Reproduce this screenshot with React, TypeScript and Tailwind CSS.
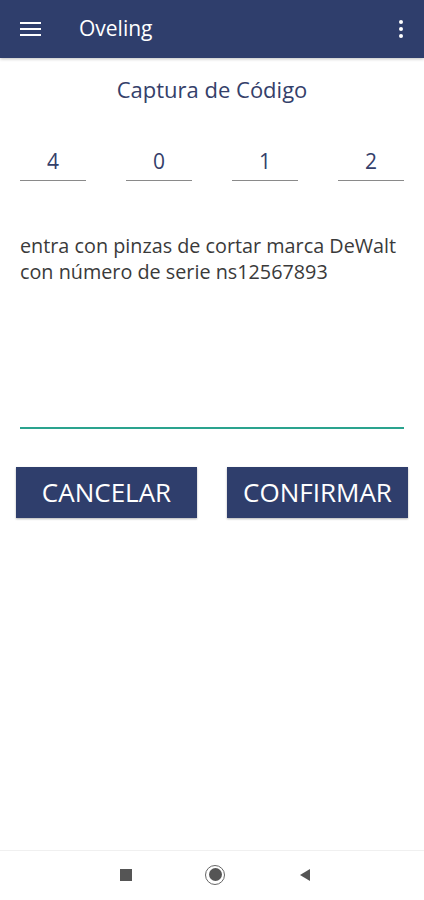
export default function App() {
  const digits = ["4", "0", "1", "2"]

  return (
    <div
      className="flex h-[900px] w-[424px] flex-col bg-white"
      style={{ fontFamily: '"Open Sans", "Noto Sans", sans-serif' }}
    >
      {/* app bar */}
      <div className="flex h-[58px] items-center bg-[#2f3e6c] shadow-[0_1px_3px_rgba(0,0,0,0.25)]">
        <div className="ml-[20px] flex w-[21px] flex-col gap-[4px]">
          <div className="h-[2px] bg-white" />
          <div className="h-[2px] bg-white" />
          <div className="h-[2px] bg-white" />
        </div>
        <div className="ml-[38px] text-[21px] text-white">Oveling</div>
        <div className="ml-auto mr-[21px] flex flex-col gap-[3px]">
          <div className="h-[4px] w-[4px] rounded-full bg-white" />
          <div className="h-[4px] w-[4px] rounded-full bg-white" />
          <div className="h-[4px] w-[4px] rounded-full bg-white" />
        </div>
      </div>

      <div className="mt-[16px] text-center text-[22px] leading-[30px] text-[#34406a]">Captura de Código</div>

      {/* code inputs */}
      <div className="mt-[44px] flex justify-between px-[20px]">
        {digits.map((d, i) => (
          <div key={i} className="flex w-[66px] flex-col items-center">
            <div className="text-[21px] leading-[26px] text-[#34406a]">{d}</div>
            <div className="mt-[6px] h-[1px] w-full bg-[#8a8a8a]" />
          </div>
        ))}
      </div>

      <div className="mt-[52px] px-[20px] text-[19.8px] leading-[26px] text-[#3a3a3a]">
        entra con pinzas de cortar marca DeWalt
        <br />
        con número de serie ns12567893
      </div>

      <div className="mx-[20px] mt-[142px] h-[2px] bg-[#2aa38e]" />

      <div className="mt-[38px] flex justify-between px-[16px]">
        <button className="h-[51px] w-[181px] bg-[#2f3e6c] text-[26px] text-white shadow-[0_1px_2px_rgba(0,0,0,0.3)]">
          CANCELAR
        </button>
        <button className="h-[51px] w-[181px] bg-[#2f3e6c] text-[26px] text-white shadow-[0_1px_2px_rgba(0,0,0,0.3)]">
          CONFIRMAR
        </button>
      </div>

      {/* nav bar */}
      <div className="mt-auto flex h-[50px] items-center justify-center gap-[73px] border-t border-[#f0f0f0] bg-white pb-[2px] pl-[8px]">
        <div className="h-[12px] w-[12px] bg-[#555]" />
        <div className="flex h-[20px] w-[20px] items-center justify-center rounded-full border-[1.5px] border-[#666]">
          <div className="h-[13px] w-[13px] rounded-full bg-[#555]" />
        </div>
        <svg width="14" height="14" viewBox="0 0 14 14">
          <path d="M12 1 L2 7 L12 13 Z" fill="#555" />
        </svg>
      </div>
    </div>
  )
}
